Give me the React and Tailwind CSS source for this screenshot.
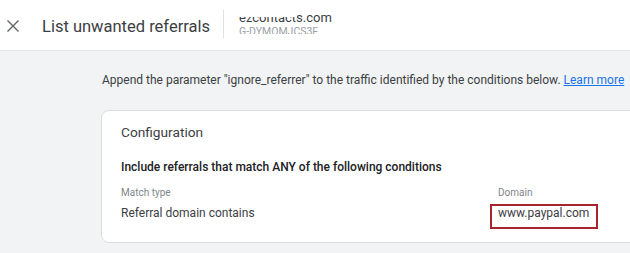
import React from 'react';

const CloseIcon = () => (
  <svg viewBox="0 0 14 14" className="h-[14px] w-[14px]" fill="none" stroke="#5f6368" strokeWidth="1.4">
    <path d="M1.5 1.5l11 11M12.5 1.5l-11 11" />
  </svg>
);

export default function App() {
  return (
    <div className="w-[630px] h-[253px] overflow-hidden bg-[#f1f3f4] font-['Roboto',sans-serif]">
      {/* header */}
      <div className="h-[51px] bg-white border-b border-[#e3e5e8] flex items-start">
        <div className="ml-[6px] mt-[19px]">
          <CloseIcon />
        </div>
        <h1 className="ml-[22px] mt-[17px] text-[16.5px] leading-[20px] text-[#3c4043]">List unwanted referrals</h1>
        <div className="ml-[13px] mt-[10px] w-px h-[28px] bg-[#e0e0e0]" />
        <div className="relative ml-[15px] mt-[10px] h-[24px] overflow-hidden">
          <div className="text-[13px] leading-[15px] text-[#3c4043]">ezcontacts.com</div>
          <div className="absolute left-0 top-0 w-[58px] h-[7px] bg-white" />
          <div className="text-[10.5px] leading-[12px] text-[#9aa0a6] mt-[1px]">G-DYMOMJCS3F</div>
        </div>
      </div>

      {/* body */}
      <div className="pl-[102px] pt-[20px]">
        <p className="text-[12px] leading-[18px] text-[#3c4043] whitespace-nowrap">
          Append the parameter "ignore_referrer" to the traffic identified by the conditions below.{' '}
          <a className="text-[#1a73e8] underline">Learn more</a>
        </p>

        <div className="mt-[21px] ml-[-1px] w-[560px] h-[133px] bg-white rounded-[8px] border border-[#dadce0] pl-[19px] pt-[13px]">
          <div className="text-[13.7px] leading-[16px] text-[#3c4043]">Configuration</div>
          <div className="mt-[19px] text-[12px] leading-[16px] font-medium text-[#202124]">
            Include referrals that match ANY of the following conditions
          </div>
          <div className="mt-[12px] flex">
            <div className="w-[377px]">
              <div className="text-[10px] leading-[12px] text-[#80868b]">Match type</div>
              <div className="mt-[6px] text-[12px] leading-[16px] text-[#3c4043]">Referral domain contains</div>
            </div>
            <div>
              <div className="text-[10px] leading-[12px] text-[#80868b]">Domain</div>
              <div className="mt-[5px] ml-[-8px] w-[108px] h-[25px] border-2 border-[#a4262c] pl-[6px]">
                <div className="mt-[-1px] text-[12px] leading-[16px] text-[#3c4043]">www.paypal.com</div>
              </div>
            </div>
          </div>
        </div>
      </div>
    </div>
  );
}
